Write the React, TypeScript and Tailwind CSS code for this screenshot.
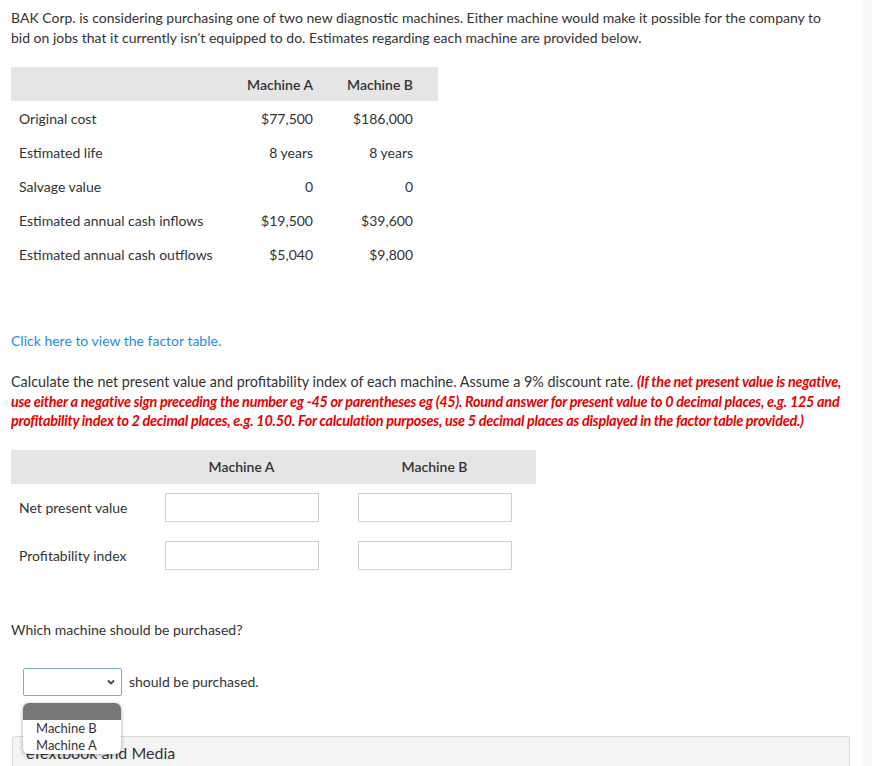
import React from "react";

const rows = [
  ["Original cost", "$77,500", "$186,000"],
  ["Estimated life", "8 years", "8 years"],
  ["Salvage value", "0", "0"],
  ["Estimated annual cash inflows", "$19,500", "$39,600"],
  ["Estimated annual cash outflows", "$5,040", "$9,800"],
];

function Field() {
  return <div className="h-[29px] w-[154px] border border-[#cfcfcf] bg-white" />;
}

export default function App() {
  return (
    <div className="flex min-h-[766px] bg-white font-['Lato','Noto_Sans',sans-serif] text-[#333]">
      <div className="relative w-[862px] shrink-0 overflow-hidden">
        <p className="pl-[11px] pr-[24px] pt-[8px] text-[14px] leading-[20px]">
          BAK Corp. is considering purchasing one of two new diagnostic machines. Either machine would make it possible for the company to
          bid on jobs that it currently isn’t equipped to do. Estimates regarding each machine are provided below.
        </p>

        {/* estimates table */}
        <div className="ml-[11px] mt-[19px] w-[427px] text-[14px]">
          <div className="flex h-[34px] items-center bg-[#e5e5e5] font-semibold">
            <div className="w-[219px]" />
            <div className="w-[83px] text-right">Machine A</div>
            <div className="w-[100px] text-right">Machine B</div>
          </div>
          {rows.map(([label, a, b]) => (
            <div key={label} className="flex h-[34px] items-center">
              <div className="w-[219px] pl-[8px]">{label}</div>
              <div className="w-[83px] text-right">{a}</div>
              <div className="w-[100px] text-right">{b}</div>
            </div>
          ))}
        </div>

        <a className="ml-[11px] mt-[59px] block text-[14px] text-[#1f8ae6]">Click here to view the factor table.</a>

        <p className="mt-[21px] px-[11px] text-[14.4px] leading-[19.5px]">
          Calculate the net present value and profitability index of each machine. Assume a 9% discount rate.{" "}
          <span className="font-bold italic tracking-[-0.25px] text-[#e60000]">
            (If the net present value is negative, use either a negative sign preceding the number eg -45 or parentheses eg (45). Round answer
            for present value to 0 decimal places, e.g. 125 and profitability index to 2 decimal places, e.g. 10.50. For calculation purposes,
            use 5 decimal places as displayed in the factor table provided.)
          </span>
        </p>

        {/* answer table */}
        <div className="ml-[11px] mt-[19px] w-[525px] text-[14px]">
          <div className="flex h-[34px] items-center bg-[#e5e5e5] font-semibold">
            <div className="w-[139px]" />
            <div className="w-[183px] text-center">Machine A</div>
            <div className="w-[203px] text-center">Machine B</div>
          </div>
          {["Net present value", "Profitability index"].map((label) => (
            <div key={label} className="flex h-[48px] items-center">
              <div className="w-[139px] pl-[8px]">{label}</div>
              <div className="flex w-[183px] justify-center">
                <Field />
              </div>
              <div className="flex w-[203px] justify-center">
                <Field />
              </div>
            </div>
          ))}
        </div>

        <p className="ml-[11px] mt-[39px] text-[14px]">Which machine should be purchased?</p>

        <div className="ml-[23px] mt-[28px] flex items-center gap-[7px]">
          <div className="flex h-[28px] w-[99px] items-center justify-end rounded-[2px] border border-[#7fa8d8] bg-white pr-[5px]">
            <svg width="10" height="10" viewBox="0 0 10 10" fill="none" stroke="#444" strokeWidth="1.8">
              <path d="M2 3.5 5 6.5 8 3.5" />
            </svg>
          </div>
          <span className="text-[14px]">should be purchased.</span>
        </div>

        <div className="mx-[12px] mt-[40px] h-[40px] rounded-t-[3px] border border-b-0 border-[#dcdcdc] bg-[#f4f4f4] px-[13px] pt-[4px] text-[16px]">
          eTextbook and Media
        </div>

        {/* open select menu */}
        <div className="absolute left-[23px] top-[703px] w-[98px] overflow-hidden rounded-[6px] bg-white text-[13px] leading-[17px] shadow-[0_1px_4px_rgba(0,0,0,0.35)]">
          <div className="h-[17px] bg-[#777]" />
          <div className="pl-[13px]">Machine B</div>
          <div className="pl-[13px]">Machine A</div>
        </div>
      </div>
      <div className="flex-1 bg-[#f9f9f9]" />
    </div>
  );
}
